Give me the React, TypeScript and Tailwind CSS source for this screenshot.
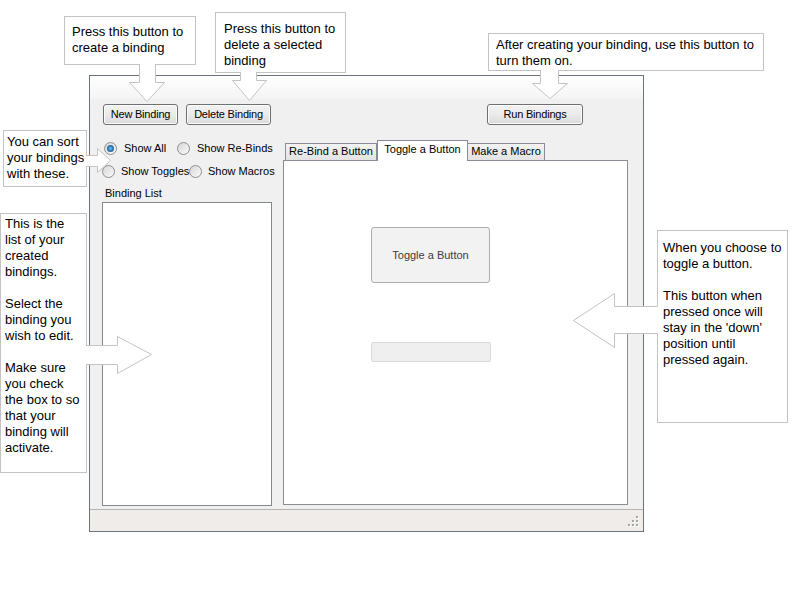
import type { ReactNode } from 'react';

type Arrow = { fill: string; stroke: string };

// callout arrows, drawn over the window
const arrows: Arrow[] = [
  {
    fill: '139.5,62 155.5,62 155.5,82.5 164.5,82.5 147,101.5 129.5,82.5 139.5,82.5',
    stroke: '139.5,64 139.5,82.5 129.5,82.5 147,101.5 164.5,82.5 155.5,82.5 155.5,64',
  },
  {
    fill: '240.5,70 256.5,70 256.5,80.5 266.5,80.5 249.5,100.5 232.5,80.5 240.5,80.5',
    stroke: '240.5,72 240.5,80.5 232.5,80.5 249.5,100.5 266.5,80.5 256.5,80.5 256.5,72',
  },
  {
    fill: '540.5,68 558.5,68 558.5,83.5 567.5,83.5 550,98.5 532.5,83.5 540.5,83.5',
    stroke: '540.5,70 540.5,83.5 532.5,83.5 550,98.5 567.5,83.5 558.5,83.5 558.5,70',
  },
  {
    fill: '84,155.5 97.5,155.5 97.5,148.5 110.5,160.5 97.5,172.5 97.5,166.5 84,166.5',
    stroke: '86,155.5 97.5,155.5 97.5,148.5 110.5,160.5 97.5,172.5 97.5,166.5 86,166.5',
  },
  {
    fill: '84,345.5 117.5,345.5 117.5,336.5 151.5,354.5 117.5,373.5 117.5,364.5 84,364.5',
    stroke: '86,345.5 117.5,345.5 117.5,336.5 151.5,354.5 117.5,373.5 117.5,364.5 86,364.5',
  },
  {
    fill: '659,306.5 614.5,306.5 614.5,293.5 573.5,320.5 614.5,347.5 614.5,333.5 659,333.5',
    stroke: '657,306.5 614.5,306.5 614.5,293.5 573.5,320.5 614.5,347.5 614.5,333.5 657,333.5',
  },
];

function Callout({ className, children }: { className: string; children: ReactNode }) {
  return (
    <div
      className={`absolute border border-[#c3c3c3] bg-white text-[13px] leading-[16px] text-black whitespace-pre ${className}`}
    >
      {children}
    </div>
  );
}

function WinButton({ label, className }: { label: string; className: string }) {
  return (
    <button
      type="button"
      className={`h-[21px] rounded-[3px] border border-[#707070] bg-linear-to-b from-[#f2f2f2] via-[#ebebeb] to-[#dadada] text-[11px] tracking-[-0.2px] text-black shadow-[inset_0_0_0_1px_#fcfcfc] ${className}`}
    >
      {label}
    </button>
  );
}

function Radio({ label, checked, gap, width }: { label: string; checked?: boolean; gap: string; width: string }) {
  return (
    <div className={`flex items-center h-[20px] ${width}`}>
      <div className="w-[13px] h-[13px] shrink-0 rounded-full border border-[#8e8f8f] bg-linear-to-br from-[#d6d6d6] to-[#fbfbfb] flex items-center justify-center">
        {checked && (
          <div className="w-[7px] h-[7px] rounded-full bg-radial from-[#6cc4f0] via-[#2a7ab8] to-[#15466f]" />
        )}
      </div>
      <span className={`${gap} text-[11px] text-black whitespace-nowrap`}>{label}</span>
    </div>
  );
}

export default function App() {
  return (
    <div className="relative w-[800px] h-[600px] overflow-hidden bg-white font-['Liberation_Sans',Arial,sans-serif]">
      <div className="pt-[75px] pl-[89px]">
        <div className="w-[555px] h-[457px] border border-[#6d737b] bg-[#f0f0f0] flex flex-col">
          <div className="h-[23px] bg-linear-to-b from-white to-[#f4f4f4]" />

          <div className="h-[26px] pt-[5px] pl-[13px] flex">
            <WinButton label="New Binding" className="w-[75px]" />
            <WinButton label="Delete Binding" className="ml-[8px] w-[85px]" />
            <WinButton label="Run Bindings" className="ml-[216px] w-[96px]" />
          </div>

          <div className="h-[384px] flex">
            <div className="ml-[12px] w-[170px] flex flex-col">
              <div className="mt-[13px] pl-[2px] flex">
                <Radio label="Show All" checked gap="ml-[7px]" width="w-[73px]" />
                <Radio label="Show Re-Binds" gap="ml-[7px]" width="w-[95px]" />
              </div>
              <div className="mt-[3px] flex">
                <Radio label="Show Toggles" gap="ml-[6px]" width="w-[87px]" />
                <Radio label="Show Macros" gap="ml-[6px]" width="w-[83px]" />
              </div>
              <div className="mt-[5px] h-[14px] pl-[3px] text-[11px] leading-[14px] text-black">Binding List</div>
              <div className="mt-[2px] h-[304px] border border-[#828790] bg-white" />
            </div>

            <div className="ml-[11px] w-[345px] mt-[15px] flex flex-col">
              <div className="h-[20px] pl-[2px] flex items-end">
                <div className="h-[17px] w-[92px] border border-b-0 border-[#898c95] bg-linear-to-b from-[#f3f3f3] to-[#e3e3e3] text-[11px] leading-[15px] text-center text-black">
                  Re-Bind a Button
                </div>
                <div className="relative z-10 -mb-px h-[21px] w-[91px] border border-b-0 border-[#898c95] bg-white text-[11px] leading-[17px] text-center text-black">
                  Toggle a Button
                </div>
                <div className="h-[17px] w-[77px] border border-b-0 border-l-0 border-[#898c95] bg-linear-to-b from-[#f3f3f3] to-[#e3e3e3] text-[11px] leading-[15px] text-center text-black">
                  Make a Macro
                </div>
              </div>
              <div className="h-[345px] border border-[#898c95] bg-white flex flex-col">
                <button
                  type="button"
                  className="ml-[87px] mt-[66px] w-[119px] h-[56px] rounded-[3px] border border-[#adadad] bg-[#f2f2f2] text-[11px] text-[#3c3c3c]"
                >
                  Toggle a Button
                </button>
                <div className="ml-[87px] mt-[59px] w-[120px] h-[20px] rounded-[2px] border border-[#dadada] bg-[#efefef]" />
              </div>
            </div>
          </div>

          <div className="h-[22px] border-t border-[#b4b4b4] bg-[#efecea] flex justify-end items-end">
            <svg width="14" height="14" viewBox="0 0 14 14" className="mb-[2px] mr-[2px]">
              {[
                [9, 1],
                [5, 5],
                [9, 5],
                [1, 9],
                [5, 9],
                [9, 9],
              ].map(([x, y]) => (
                <g key={`${x}-${y}`}>
                  <rect x={x + 1} y={y + 1} width="2" height="2" fill="#ffffff" />
                  <rect x={x} y={y} width="2" height="2" fill="#a6a6a6" />
                </g>
              ))}
            </svg>
          </div>
        </div>
      </div>

      <Callout className="left-[64px] top-[16px] w-[132px] h-[49px] pl-[7px] pt-[7px]">
        {'Press this button to\ncreate a binding'}
      </Callout>
      <Callout className="left-[215px] top-[12px] w-[131px] h-[61px] pl-[8px] pt-[8px]">
        {'Press this button to\ndelete a selected\nbinding'}
      </Callout>
      <Callout className="left-[488px] top-[33px] w-[276px] h-[38px] pl-[7px] pt-[3px]">
        {'After creating your binding, use this button to\nturn them on.'}
      </Callout>
      <Callout className="left-[3px] top-[130px] w-[84px] h-[57px] pl-[3px] pt-[3px]">
        {'You can sort\nyour bindings\nwith these.'}
      </Callout>
      <Callout className="left-0 top-[213px] w-[87px] h-[260px] pl-[4px] pt-[2px]">
        {'This is the\nlist of your\ncreated\nbindings.\n\nSelect the\nbinding you\nwish to edit.\n\nMake sure\nyou check\nthe box to so\nthat your\nbinding will\nactivate.'}
      </Callout>
      <Callout className="left-[657px] top-[230px] w-[131px] h-[193px] pl-[5px] pt-[9px]">
        {"When you choose to\ntoggle a button.\n\nThis button when\npressed once will\nstay in the 'down'\nposition until\npressed again."}
      </Callout>

      <svg className="pointer-events-none absolute inset-0" width="800" height="600">
        {arrows.map((a, i) => (
          <g key={i}>
            <polygon points={a.fill} fill="#ffffff" />
            <polyline points={a.stroke} fill="none" stroke="#c3c3c3" strokeWidth="1" />
          </g>
        ))}
      </svg>
    </div>
  );
}
